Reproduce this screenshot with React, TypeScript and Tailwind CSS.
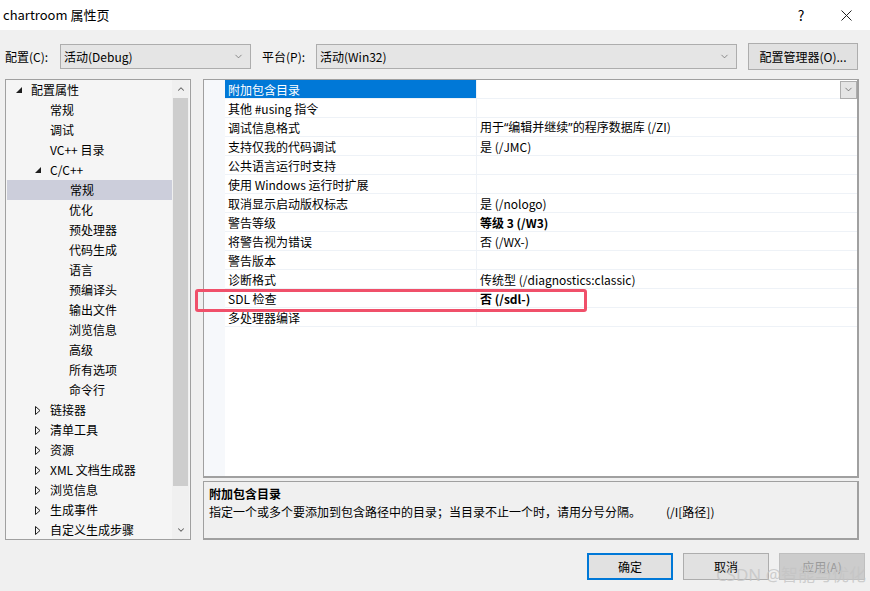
import { ChevronDown, ChevronUp } from 'lucide-react';

interface TreeItem {
  label: string;
  level: 0 | 1 | 2;
  node?: 'open' | 'closed';
  selected?: boolean;
}

interface PropRow {
  name: string;
  value: React.ReactNode;
  bold?: boolean;
  selected?: boolean;
}

const treeItems: TreeItem[] = [
  { label: '配置属性', level: 0, node: 'open' },
  { label: '常规', level: 1 },
  { label: '调试', level: 1 },
  { label: 'VC++ 目录', level: 1 },
  { label: 'C/C++', level: 1, node: 'open' },
  { label: '常规', level: 2, selected: true },
  { label: '优化', level: 2 },
  { label: '预处理器', level: 2 },
  { label: '代码生成', level: 2 },
  { label: '语言', level: 2 },
  { label: '预编译头', level: 2 },
  { label: '输出文件', level: 2 },
  { label: '浏览信息', level: 2 },
  { label: '高级', level: 2 },
  { label: '所有选项', level: 2 },
  { label: '命令行', level: 2 },
  { label: '链接器', level: 1, node: 'closed' },
  { label: '清单工具', level: 1, node: 'closed' },
  { label: '资源', level: 1, node: 'closed' },
  { label: 'XML 文档生成器', level: 1, node: 'closed' },
  { label: '浏览信息', level: 1, node: 'closed' },
  { label: '生成事件', level: 1, node: 'closed' },
  { label: '自定义生成步骤', level: 1, node: 'closed' },
];

// narrow latin quotes like the original font draws them
const q = (s: string) => <span className="font-['Noto_Sans',sans-serif]">{s}</span>;

const props: PropRow[] = [
  { name: '附加包含目录', value: '', selected: true },
  { name: '其他 #using 指令', value: '' },
  { name: '调试信息格式', value: <>用于{q('“')}编辑并继续{q('”')}的程序数据库 (/ZI)</> },
  { name: '支持仅我的代码调试', value: '是 (/JMC)' },
  { name: '公共语言运行时支持', value: '' },
  { name: '使用 Windows 运行时扩展', value: '' },
  { name: '取消显示启动版权标志', value: '是 (/nologo)' },
  { name: '警告等级', value: '等级 3 (/W3)', bold: true },
  { name: '将警告视为错误', value: '否 (/WX-)' },
  { name: '警告版本', value: '' },
  { name: '诊断格式', value: '传统型 (/diagnostics:classic)' },
  { name: 'SDL 检查', value: '否 (/sdl-)', bold: true },
  { name: '多处理器编译', value: '' },
];

const indent = ['pl-[10px]', 'pl-[29px]', 'pl-[48px]'];

function NodeGlyph({ node }: { node?: 'open' | 'closed' }) {
  if (node === 'open') {
    return (
      <svg width="6" height="6" viewBox="0 0 6 6">
        <polygon points="6,0 6,6 0,6" fill="#1e1e1e" />
      </svg>
    );
  }
  if (node === 'closed') {
    return (
      <svg width="6" height="9" viewBox="0 0 6 9">
        <polygon points="0.5,0.5 5,4.5 0.5,8.5" fill="none" stroke="#1e1e1e" strokeWidth="1" />
      </svg>
    );
  }
  return null;
}

function Combo({ text, width }: { text: string; width: string }) {
  return (
    <div className={`${width} h-[25px] flex items-center justify-between bg-[#e5e5e5] border border-[#adadad] pl-[3px] pr-[6px]`}>
      <span>{text}</span>
      <ChevronDown className="w-[11px] h-[11px] text-[#606060]" strokeWidth={1.5} />
    </div>
  );
}

export default function App() {
  return (
    <div className="relative w-[870px] h-[591px] overflow-hidden bg-[#f0f0f0] text-[12px] leading-[16px] text-black font-['Noto_Sans_CJK_SC','Noto_Sans',sans-serif]">
      {/* Title bar */}
      <div className="h-[30px] bg-white flex items-center pl-[3px]">
        <span className="text-[13px] flex-1">chartroom 属性页</span>
        <span className="text-[14px] w-[14px] text-center mr-[33px]">?</span>
        <svg width="11" height="11" viewBox="0 0 11 11" className="mr-[18px]">
          <path d="M0.5 0.5 L10.5 10.5 M10.5 0.5 L0.5 10.5" stroke="#222" strokeWidth="1" />
        </svg>
      </div>

      {/* Config row */}
      <div className="mt-[13px] h-[27px] flex items-center pl-[5px]">
        <span className="w-[55px]">配置(C):</span>
        <Combo text="活动(Debug)" width="w-[191px]" />
        <span className="ml-[11px] w-[54px]">平台(P):</span>
        <Combo text="活动(Win32)" width="w-[421px]" />
        <button className="ml-[11px] w-[110px] h-[27px] bg-[#e1e1e1] border border-[#adadad]">配置管理器(O)...</button>
      </div>

      {/* Main */}
      <div className="mt-[9px] h-[461px] flex">
        {/* Tree */}
        <div className="ml-[5px] w-[186px] h-full border border-[#a0a0a0] bg-[#f5f5f5] flex overflow-hidden">
          <div className="flex-1 overflow-hidden">
            {treeItems.map((item, i) => (
              <div
                key={i}
                className={`h-[20px] flex items-center ${indent[item.level]} ${item.selected ? 'bg-[#cccedb] ml-[1px]' : ''}`}
              >
                <span className="w-[15px] flex items-center">
                  <NodeGlyph node={item.node} />
                </span>
                <span className="whitespace-nowrap">{item.label}</span>
              </div>
            ))}
          </div>
          <div className="w-[17px] h-full flex flex-col items-center bg-[#f0f0f0] mr-[1px]">
            <div className="h-[18px] flex items-center justify-center">
              <ChevronUp className="w-[10px] h-[10px] text-[#606060]" strokeWidth={2.5} />
            </div>
            <div className="w-[15px] h-[388px] bg-[#cdcdcd]" />
            <div className="flex-1" />
            <div className="h-[18px] flex items-center justify-center">
              <ChevronDown className="w-[10px] h-[10px] text-[#606060]" strokeWidth={2.5} />
            </div>
          </div>
        </div>

        {/* Right column */}
        <div className="ml-[12px] w-[656px] flex flex-col gap-[3px]">
          <div className="h-[399px] border border-[#a0a0a0] border-r-2 border-b-2 bg-white flex">
            <div className="w-[21px] h-full bg-[#f6f8fb]" />
            <div className="flex-1">
              {props.map((p, i) => (
                <div key={i} className="h-[19px] flex border-b border-[#eef2f7]">
                  <div
                    className={`w-[252px] pl-[3px] pt-[1px] flex items-center border-r border-[#eef2f7] whitespace-nowrap ${p.selected ? 'bg-[#0078d7] text-white' : ''}`}
                  >
                    {p.name}
                  </div>
                  <div className={`flex-1 pl-[3px] pt-[1px] flex items-center justify-between whitespace-nowrap ${p.bold ? 'font-bold' : ''}`}>
                    <span>{p.value}</span>
                    {p.selected && (
                      <div className="w-[17px] h-[18px] bg-[#e5e5e5] border border-[#adadad] flex items-center justify-center">
                        <ChevronDown className="w-[11px] h-[11px] text-[#505050]" strokeWidth={1.5} />
                      </div>
                    )}
                  </div>
                </div>
              ))}
            </div>
          </div>
          <div className="flex-1 border border-[#a0a0a0] border-r-2 border-b-2 bg-[#f0f0f0] pl-[5px] pt-[3px]">
            <div className="font-bold h-[18px] flex items-center">附加包含目录</div>
            <div className="h-[18px] flex items-center whitespace-nowrap">
              <span>指定一个或多个要添加到包含路径中的目录；当目录不止一个时，请用分号分隔。</span>
              <span className="ml-[25px]">(/I[路径])</span>
            </div>
          </div>
        </div>
      </div>

      {/* Buttons */}
      <div className="mt-[13px] h-[27px] flex pl-[587px] gap-[10px]">
        <button className="w-[86px] h-[27px] bg-[#e1e1e1] border-2 border-[#0078d7]">确定</button>
        <button className="w-[86px] h-[27px] bg-[#e1e1e1] border border-[#adadad]">取消</button>
        <button className="w-[86px] h-[27px] bg-[#cccccc] border border-[#bfbfbf] text-[#9a9a9a]">应用(A)</button>
      </div>

      {/* Annotation */}
      <div className="absolute left-[195px] top-[289px] w-[392px] h-[23px] border-[3px] border-[#f0506a] rounded-[3px]" />

      {/* Watermark */}
      <div className="absolute right-[4px] bottom-[5px] text-[17px] leading-[22px] text-[#c4c4c4]/80 font-['Noto_Sans','Noto_Sans_CJK_SC',sans-serif]">
        CSDN @智能与优化
      </div>
    </div>
  );
}
